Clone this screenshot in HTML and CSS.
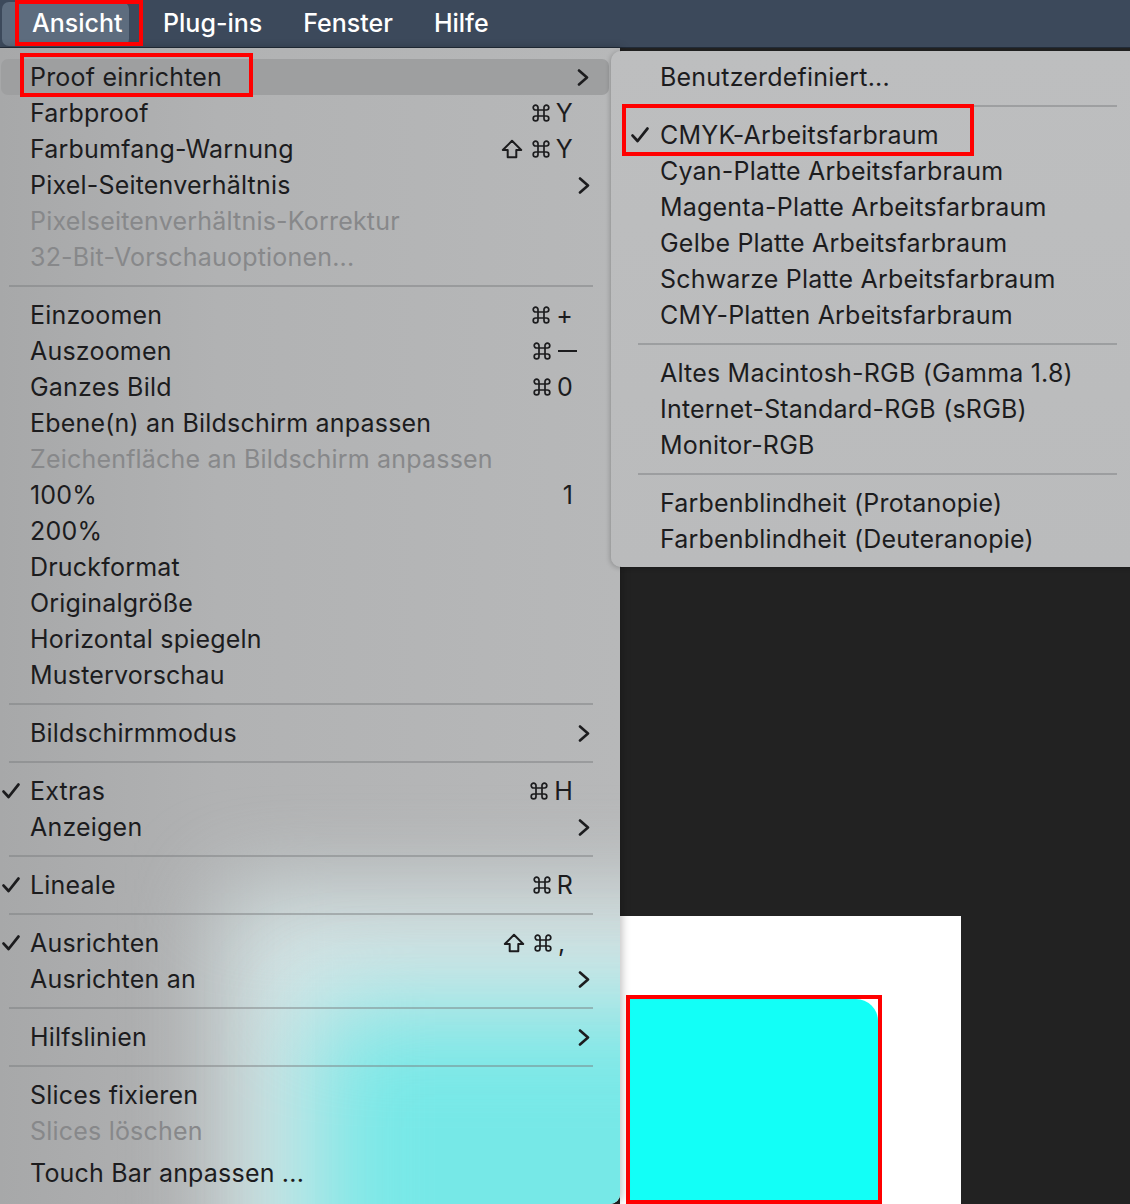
FILE: index.html
```html
<!DOCTYPE html>
<html lang="de">
<head>
<meta charset="utf-8">
<title>Ansicht – Proof einrichten</title>
<link rel="stylesheet" href="styles.css">
</head>
<body>
<svg class="defs" width="0" height="0" aria-hidden="true">
  <defs>
    <symbol id="cmd" viewBox="0 0 20 20"><path d="M7 7 V4.6 A2.4 2.4 0 1 0 4.6 7 H15.4 A2.4 2.4 0 1 0 13 4.6 V15.4 A2.4 2.4 0 1 0 15.4 13 H4.6 A2.4 2.4 0 1 0 7 15.4 Z"/></symbol>
    <symbol id="shift" viewBox="0 0 22 20"><path d="M11 1.8 L20.2 11 H15.3 V18.3 H6.7 V11 H1.8 Z"/></symbol>
    <symbol id="chev" viewBox="0 0 12 17"><path d="M2 1.5 L10 8.5 L2 15.5"/></symbol>
    <symbol id="check" viewBox="0 0 18 16"><path d="M1.6 8.6 L6.6 14 L16.4 1.6"/></symbol>
  </defs>
</svg>
<div class="screen">
  <header class="menubar">
    <div class="mb-item active">Ansicht<span class="redbox rb-ansicht"></span></div>
    <div class="mb-item">Plug-ins</div>
    <div class="mb-item">Fenster</div>
    <div class="mb-item">Hilfe</div>
  </header>

  <div class="workspace">
    <nav class="menu main">
      <div class="row hl"><span class="chk"></span><span class="lbl">Proof einrichten</span><span class="sc"></span><span class="arr"><svg class="i-chev"><use href="#chev"/></svg></span><span class="redbox rb-proof"></span></div>
      <div class="row"><span class="chk"></span><span class="lbl">Farbproof</span><span class="sc"><svg class="i-cmd"><use href="#cmd"/></svg><span>Y</span></span><span class="arr"></span></div>
      <div class="row"><span class="chk"></span><span class="lbl">Farbumfang-Warnung</span><span class="sc"><svg class="i-shift"><use href="#shift"/></svg><svg class="i-cmd"><use href="#cmd"/></svg><span>Y</span></span><span class="arr"></span></div>
      <div class="row"><span class="chk"></span><span class="lbl">Pixel-Seitenverhältnis</span><span class="sc"></span><span class="arr"><svg class="i-chev"><use href="#chev"/></svg></span></div>
      <div class="row dis"><span class="chk"></span><span class="lbl">Pixelseitenverhältnis-Korrektur</span><span class="sc"></span><span class="arr"></span></div>
      <div class="row dis"><span class="chk"></span><span class="lbl">32-Bit-Vorschauoptionen...</span><span class="sc"></span><span class="arr"></span></div>
      <div class="sep"></div>
      <div class="row"><span class="chk"></span><span class="lbl">Einzoomen</span><span class="sc"><svg class="i-cmd"><use href="#cmd"/></svg><span>+</span></span><span class="arr"></span></div>
      <div class="row"><span class="chk"></span><span class="lbl">Auszoomen</span><span class="sc"><svg class="i-cmd"><use href="#cmd"/></svg><span class="minus"></span></span><span class="arr"></span></div>
      <div class="row"><span class="chk"></span><span class="lbl">Ganzes Bild</span><span class="sc"><svg class="i-cmd"><use href="#cmd"/></svg><span>0</span></span><span class="arr"></span></div>
      <div class="row"><span class="chk"></span><span class="lbl">Ebene(n) an Bildschirm anpassen</span><span class="sc"></span><span class="arr"></span></div>
      <div class="row dis"><span class="chk"></span><span class="lbl">Zeichenfläche an Bildschirm anpassen</span><span class="sc"></span><span class="arr"></span></div>
      <div class="row"><span class="chk"></span><span class="lbl">100%</span><span class="sc"><span>1</span></span><span class="arr"></span></div>
      <div class="row"><span class="chk"></span><span class="lbl">200%</span><span class="sc"></span><span class="arr"></span></div>
      <div class="row"><span class="chk"></span><span class="lbl">Druckformat</span><span class="sc"></span><span class="arr"></span></div>
      <div class="row"><span class="chk"></span><span class="lbl">Originalgröße</span><span class="sc"></span><span class="arr"></span></div>
      <div class="row"><span class="chk"></span><span class="lbl">Horizontal spiegeln</span><span class="sc"></span><span class="arr"></span></div>
      <div class="row"><span class="chk"></span><span class="lbl">Mustervorschau</span><span class="sc"></span><span class="arr"></span></div>
      <div class="sep"></div>
      <div class="row"><span class="chk"></span><span class="lbl">Bildschirmmodus</span><span class="sc"></span><span class="arr"><svg class="i-chev"><use href="#chev"/></svg></span></div>
      <div class="sep"></div>
      <div class="row"><span class="chk"><svg class="i-check"><use href="#check"/></svg></span><span class="lbl">Extras</span><span class="sc"><svg class="i-cmd"><use href="#cmd"/></svg><span>H</span></span><span class="arr"></span></div>
      <div class="row"><span class="chk"></span><span class="lbl">Anzeigen</span><span class="sc"></span><span class="arr"><svg class="i-chev"><use href="#chev"/></svg></span></div>
      <div class="sep"></div>
      <div class="row"><span class="chk"><svg class="i-check"><use href="#check"/></svg></span><span class="lbl">Lineale</span><span class="sc"><svg class="i-cmd"><use href="#cmd"/></svg><span>R</span></span><span class="arr"></span></div>
      <div class="sep"></div>
      <div class="row"><span class="chk"><svg class="i-check"><use href="#check"/></svg></span><span class="lbl">Ausrichten</span><span class="sc"><svg class="i-shift"><use href="#shift"/></svg><svg class="i-cmd"><use href="#cmd"/></svg><span class="comma">,</span></span><span class="arr"></span></div>
      <div class="row"><span class="chk"></span><span class="lbl">Ausrichten an</span><span class="sc"></span><span class="arr"><svg class="i-chev"><use href="#chev"/></svg></span></div>
      <div class="sep"></div>
      <div class="row"><span class="chk"></span><span class="lbl">Hilfslinien</span><span class="sc"></span><span class="arr"><svg class="i-chev"><use href="#chev"/></svg></span></div>
      <div class="sep"></div>
      <div class="row"><span class="chk"></span><span class="lbl">Slices fixieren</span><span class="sc"></span><span class="arr"></span></div>
      <div class="row dis"><span class="chk"></span><span class="lbl">Slices löschen</span><span class="sc"></span><span class="arr"></span></div>
      <div class="row last"><span class="chk"></span><span class="lbl">Touch Bar anpassen ...</span><span class="sc"></span><span class="arr"></span></div>
    </nav>

    <div class="canvas">
      <div class="artboard">
        <div class="shape-frame"><div class="shape"></div></div>
      </div>
    </div>

    <nav class="menu sub">
      <div class="row"><span class="chk"></span><span class="lbl">Benutzerdefiniert...</span></div>
      <div class="sep"></div>
      <div class="row"><span class="chk"><svg class="i-check"><use href="#check"/></svg></span><span class="lbl">CMYK-Arbeitsfarbraum</span><span class="redbox rb-cmyk"></span></div>
      <div class="row"><span class="chk"></span><span class="lbl">Cyan-Platte Arbeitsfarbraum</span></div>
      <div class="row"><span class="chk"></span><span class="lbl">Magenta-Platte Arbeitsfarbraum</span></div>
      <div class="row"><span class="chk"></span><span class="lbl">Gelbe Platte Arbeitsfarbraum</span></div>
      <div class="row"><span class="chk"></span><span class="lbl">Schwarze Platte Arbeitsfarbraum</span></div>
      <div class="row"><span class="chk"></span><span class="lbl">CMY-Platten Arbeitsfarbraum</span></div>
      <div class="sep"></div>
      <div class="row"><span class="chk"></span><span class="lbl">Altes Macintosh-RGB (Gamma 1.8)</span></div>
      <div class="row"><span class="chk"></span><span class="lbl">Internet-Standard-RGB (sRGB)</span></div>
      <div class="row"><span class="chk"></span><span class="lbl">Monitor-RGB</span></div>
      <div class="sep"></div>
      <div class="row"><span class="chk"></span><span class="lbl">Farbenblindheit (Protanopie)</span></div>
      <div class="row"><span class="chk"></span><span class="lbl">Farbenblindheit (Deuteranopie)</span></div>
    </nav>
  </div>
</div>
</body>
</html>
```

FILE: styles.css
```css
* { box-sizing: border-box; }

html, body {
  margin: 0;
  padding: 0;
  width: 1130px;
  height: 1204px;
  overflow: hidden;
  background: #222222;
}

.defs { position: absolute; width: 0; height: 0; overflow: hidden; }

.screen {
  display: flex;
  flex-direction: column;
  width: 1130px;
  height: 1204px;
  font-family: Inter, "Liberation Sans", sans-serif;
  color: #1c1c1e;
}

/* ---------- menubar ---------- */
.menubar {
  flex: none;
  height: 48px;
  display: flex;
  align-items: flex-start;
  padding: 2px 0 0 2px;
  background: #3c495b;
  border-bottom: 1px solid #222c39;
  color: #ffffff;
  font-size: 25px;
  font-weight: 500;
  letter-spacing: 0;
}

.mb-item {
  position: relative;
  height: 44px;
  line-height: 42px;
  padding: 0 20.5px;
}

.mb-item.active {
  padding: 0 6px 0 30px;
  margin-right: 14px;
  background: #5d6c7e;
  border-radius: 7px;
}

.redbox {
  position: absolute;
  border: 4px solid #ff0000;
  pointer-events: none;
  z-index: 4;
}

.rb-ansicht { left: 13px; top: -2px; width: 128px; height: 46px; }

/* ---------- workspace ---------- */
.workspace {
  position: relative;
  flex: 1;
  display: flex;
  min-height: 0;
}

.menu {
  font-size: 25px;
  letter-spacing: 0.2px;
}

.menu.main {
  position: relative;
  z-index: 2;
  flex: none;
  width: 620px;
  padding-top: 11px;
  overflow: hidden;
  border-bottom-right-radius: 10px;
  box-shadow: 2px 0 8px rgba(0, 0, 0, 0.25);
  background: linear-gradient(90deg, #a7a8a9 0%, #b1b2b3 35%, #b7b8b9 100%);
}

/* blurred content behind the translucent menu (artboard + cyan shape) */
.menu.main::before,
.menu.main::after {
  content: "";
  position: absolute;
  z-index: 0;
  pointer-events: none;
}

.menu.main::before {
  left: 225px;
  top: 845px;
  width: 700px;
  height: 500px;
  background: #d6e5e6;
  filter: blur(45px);
}

.menu.main::after {
  left: 315px;
  top: 960px;
  width: 600px;
  height: 400px;
  background: #76e8e7;
  filter: blur(50px);
}

.row {
  position: relative;
  z-index: 1;
  display: grid;
  grid-template-columns: 30px 1fr auto 37px;
  align-items: center;
  height: 36px;
  width: 610px;
  white-space: nowrap;
}

.row.hl {
  background: #9e9fa0;
  border-radius: 7px;
  margin-left: 1px;
  width: 608px;
  grid-template-columns: 29px 1fr auto 37px;
}

.row.dis { color: #87888a; }

.row.last { margin-top: 6px; }

.chk {
  display: flex;
  align-items: center;
  padding-left: 2px;
}

.i-check {
  width: 18px;
  height: 16px;
  fill: none;
  stroke: #1c1c1e;
  stroke-width: 2.8;
  stroke-linecap: round;
  stroke-linejoin: round;
}

.sc {
  display: flex;
  align-items: center;
  gap: 5px;
  justify-self: end;
}

.i-cmd {
  width: 20px;
  height: 20px;
  fill: none;
  stroke: #1c1c1e;
  stroke-width: 1.7;
}

.i-shift {
  width: 22px;
  height: 20px;
  margin-right: 3px;
  fill: none;
  stroke: #1c1c1e;
  stroke-width: 2;
  stroke-linejoin: round;
}

.minus {
  display: block;
  width: 19px;
  height: 2px;
  margin-left: 1px;
  margin-right: -4px;
  background: #1c1c1e;
}

.comma { width: 15px; }

.arr {
  display: flex;
  align-items: center;
  padding-left: 5px;
}

.i-chev {
  width: 12px;
  height: 17px;
  fill: none;
  stroke: #1c1c1e;
  stroke-width: 2.6;
  stroke-linecap: round;
  stroke-linejoin: round;
}

.sep {
  position: relative;
  z-index: 1;
  height: 22px;
  display: flex;
  align-items: center;
  padding: 0 17px 0 9px;
  width: 610px;
}

.sep::before {
  content: "";
  flex: 1;
  height: 2px;
  background: rgba(120, 122, 124, 0.45);
}

.rb-proof { left: 19px; top: -6px; width: 233px; height: 44px; }

/* ---------- submenu ---------- */
.menu.sub {
  position: absolute;
  z-index: 3;
  left: 611px;
  top: 3px;
  width: 540px;
  height: 516px;
  padding-top: 8px;
  border-radius: 10px;
  background: linear-gradient(180deg, #bdbebf 0%, #babbbc 100%);
  box-shadow: -1px 1px 5px rgba(0, 0, 0, 0.22);
}

.menu.sub .row {
  width: 520px;
  grid-template-columns: 49px 1fr;
}

.menu.sub .chk { padding-left: 20px; }

.menu.sub .sep {
  width: 520px;
  padding: 0 14px 0 27px;
}

.rb-cmyk { left: 11px; top: -13px; width: 352px; height: 52px; }

/* ---------- canvas ---------- */
.canvas {
  flex: 1;
  padding-top: 868px;
  overflow: hidden;
}

.artboard {
  width: 341px;
  height: 290px;
  background: #ffffff;
  padding: 79px 0 0 6px;
}

.shape-frame {
  width: 256px;
  height: 209px;
  border: 4px solid #ff0000;
  background: #ffffff;
}

.shape {
  width: 100%;
  height: 100%;
  background: #12fff7;
  border-top-right-radius: 22px;
}
```
